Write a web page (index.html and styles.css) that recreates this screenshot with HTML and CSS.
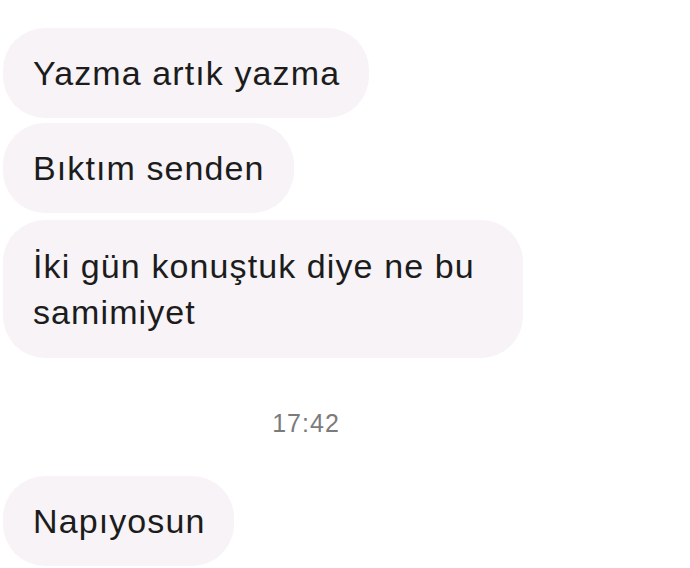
FILE: index.html
```html
<!DOCTYPE html>
<html lang="tr">
<head>
<meta charset="utf-8">
<link rel="stylesheet" href="styles.css">
</head>
<body>
<div class="chat">
  <div class="group">
    <div class="bubble">Yazma artık yazma</div>
    <div class="bubble b2">Bıktım senden</div>
    <div class="bubble b3">İki gün konuştuk diye ne bu<br>samimiyet</div>
  </div>
  <div class="time">17:42</div>
  <div class="bubble b4">Napıyosun</div>
</div>
</body>
</html>
```
FILE: styles.css
```css
html, body {
  margin: 0;
  padding: 0;
  background: #ffffff;
}
.chat {
  display: flex;
  flex-direction: column;
  align-items: flex-start;
  padding: 28px 0 0 3px;
  font-family: "Liberation Sans", Arial, sans-serif;
}
.group {
  display: flex;
  flex-direction: column;
  align-items: flex-start;
  gap: 5px;
}
.bubble {
  background: #f7f3f7;
  color: #1c1c1c;
  font-size: 34px;
  line-height: 46px;
  letter-spacing: 1.1px;
  padding: 22px 29px 22px 30px;
  border-radius: 42px;
}
.b3 {
  margin-top: 2px;
  padding: 23px 30px 23px 30px;
  width: 460px;
}
.time {
  align-self: stretch;
  width: 606px;
  text-align: center;
  color: #7b7b7b;
  font-size: 25px;
  letter-spacing: 1px;
  line-height: 30px;
  margin-top: 50px;
}
.b4 {
  margin-top: 38px;
}
```
